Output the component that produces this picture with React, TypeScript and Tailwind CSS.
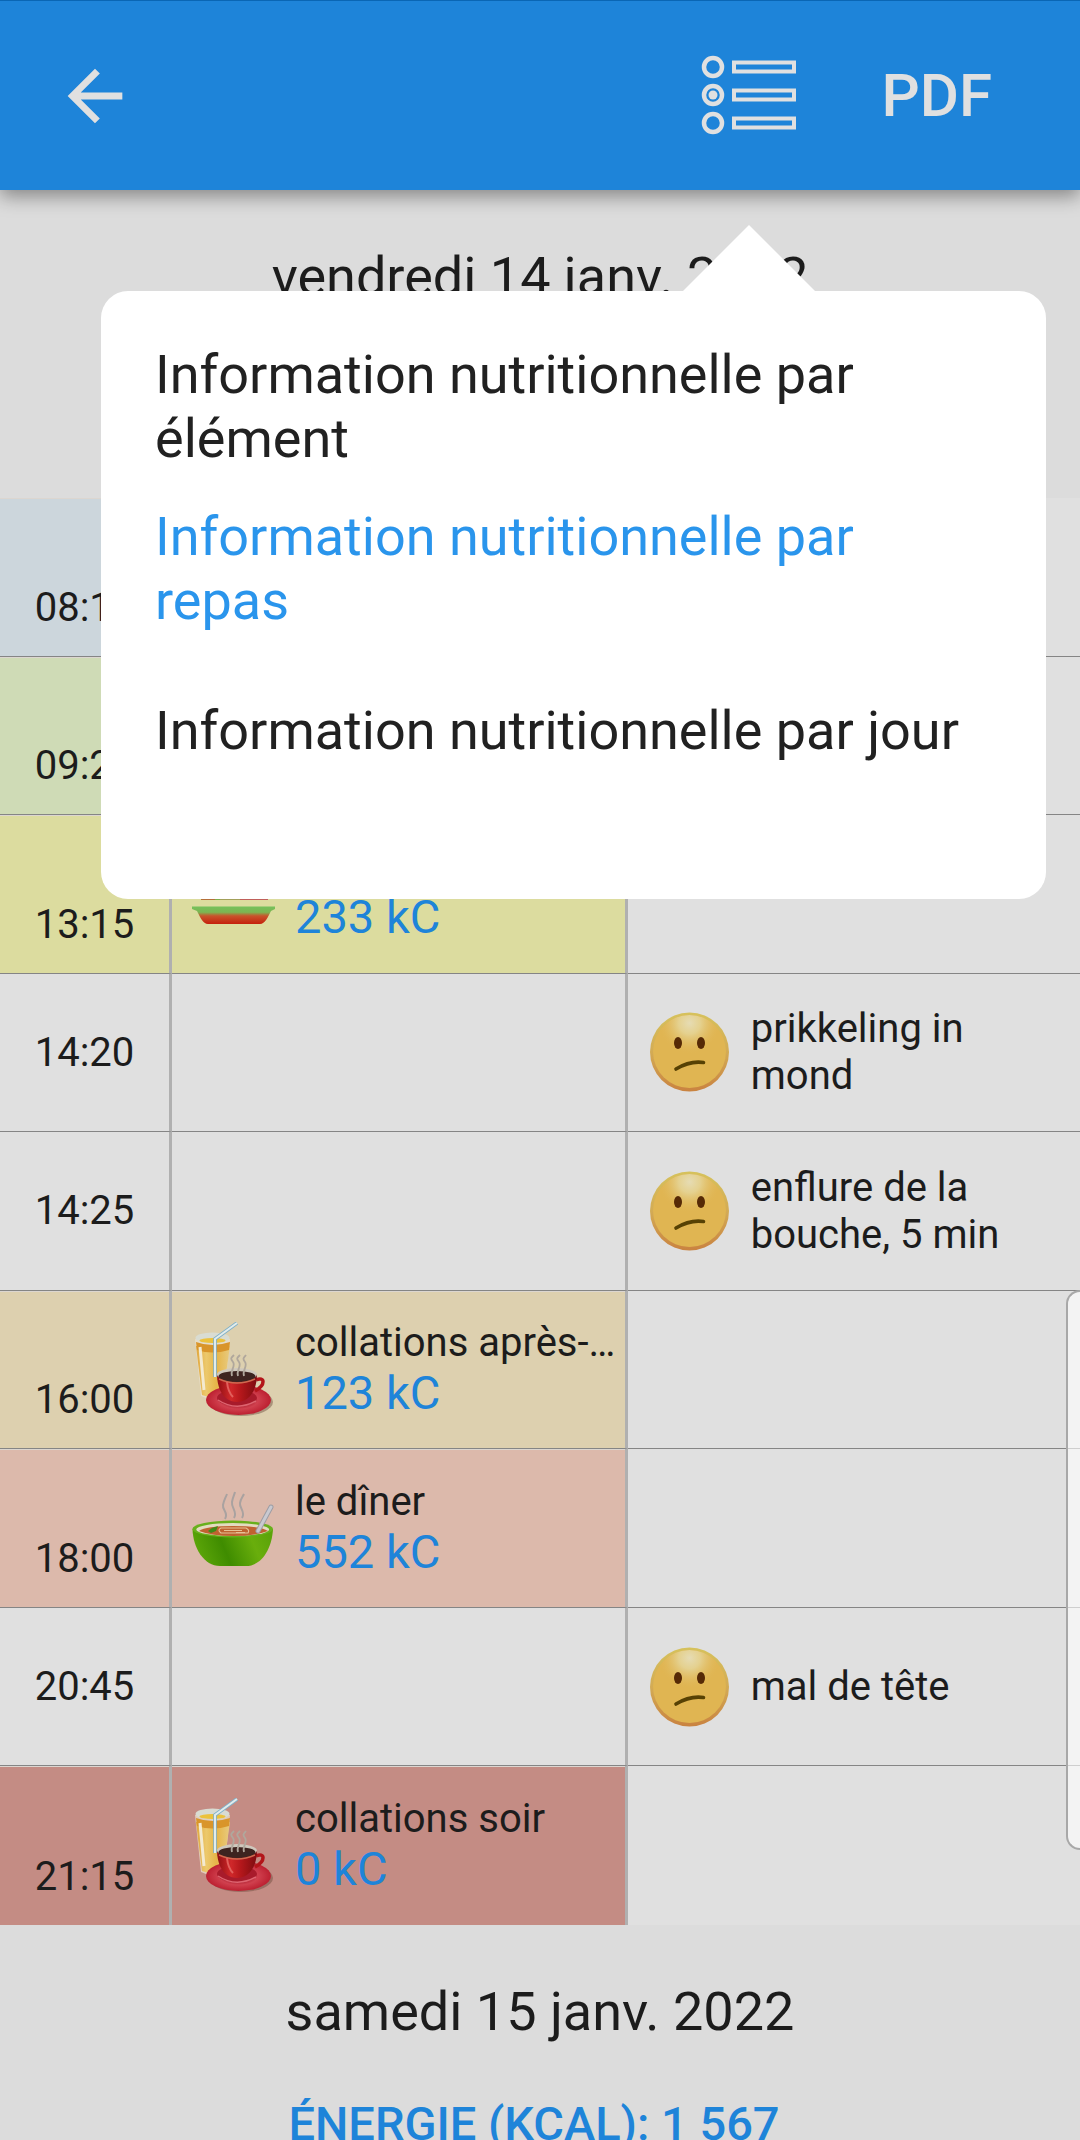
import type { ReactNode } from "react";

type IconName = "salad" | "drinks" | "soup";

type Entry = {
  time: string;
  tone?: string;
  meal?: { icon?: IconName; name: string; energy: string };
  symptom?: string;
};

const entries: Entry[] = [
  { time: "08:15", tone: "bg-[#ccd6dc]" },
  { time: "09:20", tone: "bg-[#cfdbb6]" },
  { time: "13:15", tone: "bg-[#dcdc9f]", meal: { icon: "salad", name: "le déjeuner", energy: "233 kC" } },
  { time: "14:20", symptom: "prikkeling in mond" },
  { time: "14:25", symptom: "enflure de la bouche, 5 min" },
  { time: "16:00", tone: "bg-[#ddd0af]", meal: { icon: "drinks", name: "collations après-midi", energy: "123 kC" } },
  { time: "18:00", tone: "bg-[#dcb9ab]", meal: { icon: "soup", name: "le dîner", energy: "552 kC" } },
  { time: "20:45", symptom: "mal de tête" },
  { time: "21:15", tone: "bg-[#c48c84]", meal: { icon: "drinks", name: "collations soir", energy: "0 kC" } },
];

const options = [
  { label: "Information nutritionnelle par élément", checked: false },
  { label: "Information nutritionnelle par repas", checked: true },
  { label: "Information nutritionnelle par jour", checked: false },
];

function Frame({ children }: { children: ReactNode }) {
  return (
    <svg viewBox="0 0 84 96" className="h-24 w-21 shrink-0" fill="none" aria-hidden="true">
      {children}
    </svg>
  );
}

function Salad() {
  return (
    <Frame>
      <defs>
        <linearGradient id="saladBowl" x1="0" y1="60" x2="0" y2="78" gradientUnits="userSpaceOnUse">
          <stop offset="0" stopColor="#74c25c" />
          <stop offset="0.35" stopColor="#7cb552" />
          <stop offset="0.55" stopColor="#c8542c" />
          <stop offset="1" stopColor="#c5200c" />
        </linearGradient>
      </defs>
      <path d="M10 54C12 36 26 26 42 26s28 10 32 28z" fill="#7fae4a" />
      <rect x="9" y="50" width="14" height="4" fill="#b5703a" />
      <rect x="28" y="50" width="20" height="4" fill="#a3a05a" />
      <rect x="48" y="50" width="28" height="4" fill="#c0605a" />
      <path d="M0 60.500H83V63L79 65C76 71 73 78 68 78H16C11 78 8 71 5 65L0 63z" fill="url(#saladBowl)" />
    </Frame>
  );
}

function Drinks() {
  return (
    <Frame>
      <defs>
        <linearGradient id="juice" x1="4" y1="0" x2="38" y2="0" gradientUnits="userSpaceOnUse">
          <stop offset="0" stopColor="#e0a63c" />
          <stop offset="0.3" stopColor="#ecc96c" />
          <stop offset="0.6" stopColor="#e6b548" />
          <stop offset="1" stopColor="#e8cb80" />
        </linearGradient>
        <linearGradient id="cup" x1="25" y1="0" x2="65" y2="0" gradientUnits="userSpaceOnUse">
          <stop offset="0" stopColor="#8f0f12" />
          <stop offset="0.35" stopColor="#d0282a" />
          <stop offset="0.6" stopColor="#b3171b" />
          <stop offset="1" stopColor="#7d0c10" />
        </linearGradient>
        <radialGradient id="saucer">
          <stop offset="0.3" stopColor="#a81c2c" />
          <stop offset="0.6" stopColor="#d0404e" />
          <stop offset="1" stopColor="#bc1f30" />
        </radialGradient>
      </defs>
      <path d="M3 17L9 74Q20 80 32 74L38 17z" fill="#e9e2cf" fillOpacity="0.75" />
      <path d="M4 24L10 73Q20 77 31 73L38 24z" fill="url(#juice)" />
      <path d="M4 20Q20 26 38 20L37 28Q20 33 5 28z" fill="#d9952a" />
      <ellipse cx="20.500" cy="16" rx="17" ry="5.500" fill="#d9dcd2" />
      <ellipse cx="20.500" cy="18.500" rx="13" ry="2.500" fill="#ecc23c" />
      <path d="M8 25L12 68" stroke="#f3ead0" strokeWidth="3" />
      <path d="M23 55V17L45 1" stroke="#7fb0c8" strokeWidth="3.600" />
      <path d="M23 55V17L45 1" stroke="#e2ecec" strokeWidth="2" />
      <ellipse cx="49" cy="80" rx="32" ry="14" fill="#6b4a3c" fillOpacity="0.45" />
      <ellipse cx="46.500" cy="78" rx="32.500" ry="15" fill="url(#saucer)" />
      <ellipse cx="45" cy="76" rx="20" ry="8" fill="#a81b2b" />
      <path d="M26 78Q44 90 64 79" stroke="#dd6470" strokeWidth="1.500" />
      <path d="M64 58C73 54 74 63 63 69" stroke="#b3151a" strokeWidth="3.500" />
      <path d="M25 52C25 66 31 80 45 80S65 66 65 52z" fill="url(#cup)" />
      <ellipse cx="45" cy="52.500" rx="20" ry="6.500" fill="#cfc8bd" />
      <ellipse cx="45" cy="54.500" rx="18.500" ry="5.500" fill="#3d2420" />
      <path d="M27 57Q45 65 63 57" stroke="#cf6a50" strokeWidth="1.500" />
      <path d="M35 60Q36 70 41 75" stroke="#e2605c" strokeWidth="2" />
      <path d="M40 54C38 48 44 44 41 40S39 36 42 33M46 54C44 48 50 44 47 40S45 36 48 33M52 54C50 48 56 44 53 40S52 36 54 33" stroke="#b0a79c" strokeWidth="1.800" />
    </Frame>
  );
}

function Soup() {
  return (
    <Frame>
      <defs>
        <linearGradient id="soupBowl" x1="10" y1="80" x2="76" y2="52" gradientUnits="userSpaceOnUse">
          <stop offset="0" stopColor="#5aa408" />
          <stop offset="0.35" stopColor="#3f8c00" />
          <stop offset="0.75" stopColor="#69ae0c" />
          <stop offset="1" stopColor="#5ca40a" />
        </linearGradient>
      </defs>
      <path d="M0.500 49C1 68 12 86 28 86H54C70 86 80 68 81 49z" fill="url(#soupBowl)" />
      <ellipse cx="40.700" cy="49" rx="40.300" ry="8.500" fill="#68b01c" />
      <ellipse cx="40.700" cy="49.500" rx="36.500" ry="6.500" fill="#e2dcc0" />
      <path d="M7 51Q14 46 41 46T76 51Q62 56 41 56T7 51z" fill="#bf6230" />
      <path d="M29 48H54Q58 50 56 53H29Q25 50 29 48zM32 50.500H50M44 52.500H53" stroke="#e6c296" strokeWidth="1.200" />
      <path d="M16 51L20 48L26 46L24 51L19 53z" fill="#3f8a18" />
      <path d="M33 39C37 33 30 30 31 25S33 19 35 14M42 38C46 32 39 28 40 22S42 16 43 12M50 38C54 32 47 28 48 23S50 18 52 14" stroke="#a9a2a0" strokeWidth="2" />
      <path d="M66 51L79 27" stroke="#9d9da4" strokeWidth="5" strokeLinecap="round" />
      <path d="M66 51L79 27" stroke="#c9c9d0" strokeWidth="3" strokeLinecap="round" />
    </Frame>
  );
}

function ConfusedFace() {
  return (
    <Frame>
      <defs>
        <linearGradient id="faceRim" x1="0" y1="8" x2="0" y2="88" gradientUnits="userSpaceOnUse">
          <stop offset="0" stopColor="#d6c25c" />
          <stop offset="0.5" stopColor="#d3ab55" />
          <stop offset="1" stopColor="#c98240" />
        </linearGradient>
        <radialGradient id="faceShine" cx="41.500" cy="19" r="31" gradientUnits="userSpaceOnUse">
          <stop offset="0" stopColor="#e6dcb4" />
          <stop offset="0.35" stopColor="#e5d496" stopOpacity="0.9" />
          <stop offset="1" stopColor="#e0b552" stopOpacity="0" />
        </radialGradient>
      </defs>
      <circle cx="41.500" cy="48" r="39.500" fill="url(#faceRim)" />
      <circle cx="41.500" cy="47.500" r="36.500" fill="#e0b552" />
      <circle cx="41.500" cy="47.500" r="36.500" fill="url(#faceShine)" />
      <ellipse cx="30" cy="39" rx="4" ry="6" fill="#562a06" />
      <ellipse cx="53" cy="39" rx="4" ry="6" fill="#562a06" />
      <path d="M28 65Q42 56.500 55.500 58.500" stroke="#574104" strokeWidth="3.600" strokeLinecap="round" />
    </Frame>
  );
}

const mealIcons: Record<IconName, () => ReactNode> = { salad: Salad, drinks: Drinks, soup: Soup };

function DayHeading({ date, energy }: { date: string; energy?: string }) {
  return (
    <section className="flex h-[308px] flex-col items-center pt-[55px] text-center">
      <h2 className="text-[54px] leading-[64px]">{date}</h2>
      {energy && (
        <button type="button" className="mt-[52px] pr-3 text-[47px] leading-[56px] font-medium text-[#1e84d9]">
          {energy}
        </button>
      )}
    </section>
  );
}

function Row({ entry, last }: { entry: Entry; last: boolean }) {
  const line = last ? "" : "border-b border-b-[#858585]";
  const tone = entry.tone ? `${entry.tone} shadow-[inset_0_1px_0_#dcd6d0]` : "";
  const MealIcon = entry.meal?.icon ? mealIcons[entry.meal.icon] : null;
  return (
    <tr className="h-[157px]">
      <th
        scope="row"
        className={`border-r-3 border-r-[#b0b0b0] p-0 text-center text-[40px] leading-[47px] font-normal ${entry.tone ? "pb-[25px] align-bottom" : "align-middle"} ${line} ${tone}`}
      >
        {entry.time}
      </th>
      <td className={`border-r-3 border-r-[#b0b0b0] py-0 pr-1 pl-5 ${line} ${tone}`}>
        {entry.meal && (
          <div className="flex items-center gap-[19px]">
            {MealIcon && <MealIcon />}
            <div className="min-w-0 flex-1">
              <p className="truncate text-[40px] leading-[47px]">{entry.meal.name}</p>
              <p className="text-[47px] leading-[54px] text-[#1e84d9]">{entry.meal.energy}</p>
            </div>
          </div>
        )}
      </td>
      <td className={`py-0 pr-10 pl-5 ${line}`}>
        {entry.symptom && (
          <div className="flex items-center gap-[19px]">
            <ConfusedFace />
            <p className="min-w-0 flex-1 text-[40px] leading-[47px]">{entry.symptom}</p>
          </div>
        )}
      </td>
    </tr>
  );
}

export default function App() {
  return (
    <div className="relative h-screen overflow-hidden bg-[#dcdcdc] font-[Roboto,sans-serif] text-[#1c1c1c]">
      <header className="relative flex h-[190px] items-center border-t border-[#0a66b4] bg-[#1e84d9] pr-[88px] pl-[54px] text-[#e0e0e0] shadow-[0_6px_18px_rgba(0,0,0,0.4)]">
        <button type="button" aria-label="Retour">
          <svg viewBox="0 0 24 24" className="size-[82px]" fill="currentColor" aria-hidden="true">
            <path d="M20 11H7.830l5.590-5.590L12 4l-8 8 8 8 1.410-1.410L7.830 13H20v-2z" />
          </svg>
        </button>
        <button type="button" aria-label="Options d'affichage" aria-haspopup="menu" aria-expanded="true" className="mr-[84px] ml-auto">
          <svg viewBox="0 0 96 84" className="h-21 w-24" fill="none" stroke="currentColor" aria-hidden="true">
            <g strokeWidth="4.500">
              <circle cx="12" cy="13" r="9" />
              <circle cx="12" cy="41" r="9" />
              <circle cx="12" cy="69" r="9" />
            </g>
            <circle cx="12" cy="41" r="4.500" fill="currentColor" stroke="none" />
            <g strokeWidth="4">
              <rect x="33" y="8.500" width="60" height="9" />
              <rect x="33" y="36.500" width="60" height="9" />
              <rect x="33" y="64.500" width="60" height="9" />
            </g>
          </svg>
        </button>
        <button type="button" className="text-[60px] leading-[70px] font-medium">
          PDF
        </button>
      </header>

      <main>
        <DayHeading date="vendredi 14 janv. 2022" />
        <table className="h-[1427px] w-full table-fixed border-separate border-spacing-0 bg-[#e0e0e0]">
          <colgroup>
            <col className="w-[172px]" />
            <col className="w-[42.2%]" />
            <col />
          </colgroup>
          <tbody>
            {entries.map((entry, i) => (
              <Row key={entry.time} entry={entry} last={i === entries.length - 1} />
            ))}
          </tbody>
        </table>
        <DayHeading date="samedi 15 janv. 2022" energy="ÉNERGIE (KCAL): 1 567" />
      </main>

      <div role="menu" className="absolute top-[225px] right-[34px] left-[101px] flex flex-col">
        <svg viewBox="0 0 134 67" className="mr-[230px] h-[67px] w-[134px] self-end" fill="#fff" aria-hidden="true">
          <path d="M67 0L134 67H0z" />
        </svg>
        <div className="-mt-px flex flex-col rounded-[27px] bg-white px-[54px] pt-[35px] pb-[87px]">
          {options.map((option) => (
            <button
              key={option.label}
              type="button"
              role="menuitemradio"
              aria-checked={option.checked}
              className={`flex h-[162px] items-center text-left text-[54px] leading-[64px] ${option.checked ? "text-[#2a95ec]" : "text-[#212121]"}`}
            >
              {option.label}
            </button>
          ))}
        </div>
      </div>

      <div className="absolute top-[1290px] right-0 h-[560px] w-[14px] rounded-l-[16px] border-2 border-r-0 border-[#a8a8a8] bg-white/60" />
    </div>
  );
}
